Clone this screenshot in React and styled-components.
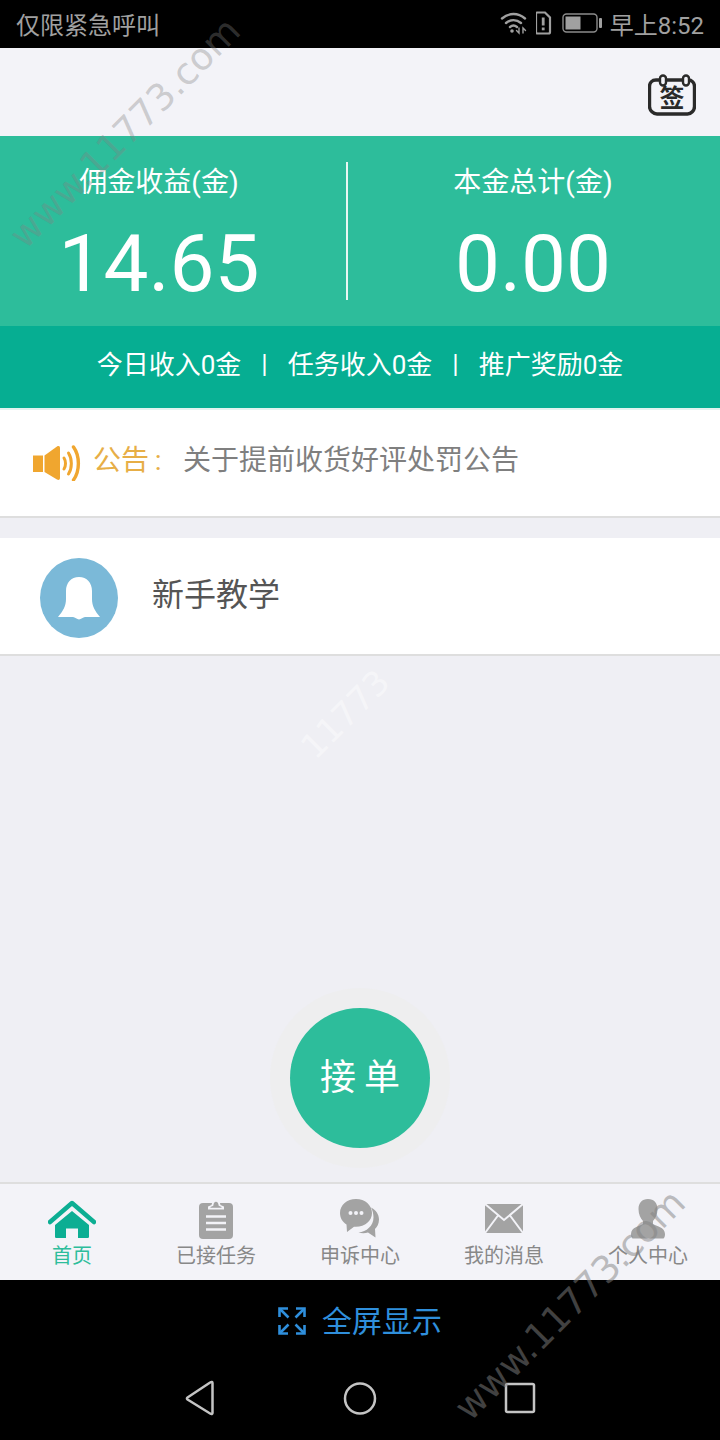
import React from 'react';
import styled, { createGlobalStyle } from 'styled-components';

const GlobalStyle = createGlobalStyle`
  html, body {
    margin: 0;
    padding: 0;
    background: #000;
  }
  body {
    font-family: Roboto, "Noto Sans CJK SC", sans-serif;
  }
`;

const Screen = styled.div`
  position: relative;
  width: 720px;
  height: 1440px;
  overflow: hidden;
  display: flex;
  flex-direction: column;
  background: #efeff4;
`;

const StatusBar = styled.div`
  height: 48px;
  flex: none;
  box-sizing: border-box;
  background: #000;
  color: #a0a0a0;
  display: flex;
  align-items: center;
  justify-content: space-between;
  padding: 0 16px 2px;
  font-size: 24px;
`;

const StatusRight = styled.div`
  display: flex;
  align-items: center;
  gap: 8px;
`;

const TopBar = styled.div`
  height: 88px;
  flex: none;
  box-sizing: border-box;
  background: #f3f3f8;
  display: flex;
  align-items: center;
  justify-content: flex-end;
  padding: 6px 24px 0 0;
`;

const SignIcon = styled.div`
  position: relative;
  width: 48px;
  height: 42px;
  display: flex;
  align-items: center;
  justify-content: center;
  color: #2a2a2a;
  font-size: 25px;
  font-weight: 700;
  line-height: 1;
`;

const SignFrame = styled.svg`
  position: absolute;
  inset: 0;
`;

const SignText = styled.span`
  position: relative;
  top: 3px;
`;

const Stats = styled.div`
  height: 190px;
  flex: none;
  background: #2dbd9b;
  display: grid;
  grid-template-columns: 348px 370px;
  align-items: center;
  color: #fff;
`;

const StatColumn = styled.div`
  height: 138px;
  display: flex;
  flex-direction: column;
  align-items: center;
  box-sizing: border-box;
  padding-top: 2px;
  padding-right: ${(p) => (p.$first ? '28px' : '0')};
  border-right: ${(p) => (p.$first ? '2px solid #e8f7f3' : 'none')};
`;

const StatLabel = styled.div`
  font-size: 28px;
  line-height: 38px;
`;

const StatValue = styled.div`
  font-size: 80px;
  line-height: 100px;
  margin-top: 12px;
`;

const Strip = styled.div`
  height: 84px;
  flex: none;
  box-sizing: border-box;
  background: #06ae92;
  color: #fff;
  font-size: 26px;
  display: flex;
  align-items: center;
  justify-content: center;
  gap: 20px;
  padding-bottom: 10px;
  border-bottom: 2px solid #e2f3ef;
`;

const StripDivider = styled.span`
  position: relative;
  top: 2px;
`;

const Notice = styled.div`
  height: 108px;
  flex: none;
  box-sizing: border-box;
  background: #fff;
  border-bottom: 2px solid #dedede;
  display: flex;
  align-items: center;
  padding: 0 0 0 32px;
  font-size: 28px;
`;

const NoticeLabel = styled.span`
  color: #e7ae46;
  margin-left: 11px;
  width: 90px;
  position: relative;
  top: -5px;
`;

const NoticeText = styled.span`
  color: #7f7f7f;
  position: relative;
  top: -5px;
`;

const GuideRow = styled.div`
  height: 118px;
  flex: none;
  box-sizing: border-box;
  margin-top: 20px;
  background: #fff;
  border-bottom: 2px solid #dedede;
  display: flex;
  align-items: center;
  padding: 4px 0 0 40px;
  gap: 34px;
  font-size: 32px;
  color: #555;
`;

const GuideLabel = styled.span`
  position: relative;
  top: -6px;
`;

const Main = styled.div`
  flex: 1;
  display: flex;
  flex-direction: column;
  align-items: center;
  justify-content: flex-end;
  padding-bottom: 14px;
`;

const OrderHalo = styled.div`
  width: 180px;
  height: 180px;
  border-radius: 50%;
  background: #eeeeef;
  display: flex;
  align-items: center;
  justify-content: center;
`;

const OrderButton = styled.div`
  width: 140px;
  height: 140px;
  border-radius: 50%;
  background: #2dbd9b;
  color: #fff;
  font-size: 36px;
  letter-spacing: 8px;
  padding-left: 8px;
  box-sizing: border-box;
  padding-bottom: 8px;
  display: flex;
  align-items: center;
  justify-content: center;
`;

const TabBar = styled.div`
  height: 98px;
  flex: none;
  box-sizing: border-box;
  background: #f3f3f8;
  border-top: 2px solid #dedede;
  display: grid;
  grid-template-columns: repeat(5, 144px);
`;

const Tab = styled.div`
  display: flex;
  flex-direction: column;
  align-items: center;
  padding-top: 15px;
  font-size: 20px;
  line-height: 28px;
  color: ${(p) => (p.$active ? '#2dbd9b' : '#888')};
`;

const TabIcon = styled.div`
  width: 50px;
  height: 40px;
  margin-bottom: 3px;
  display: flex;
  justify-content: center;
  align-items: center;
`;

const Bottom = styled.div`
  height: 160px;
  flex: none;
  background: #000;
  display: flex;
  flex-direction: column;
  align-items: center;
`;

const FullScreen = styled.div`
  height: 82px;
  display: flex;
  align-items: center;
  gap: 16px;
  color: #2f8fdc;
  font-size: 30px;
`;

const FullScreenLabel = styled.span`
  position: relative;
  top: -2px;
`;

const NavKeys = styled.div`
  width: 100%;
  height: 40px;
  margin-top: 17px;
  display: flex;
  justify-content: center;
  gap: 127px;
`;

const Watermark = styled.div`
  position: absolute;
  left: ${(p) => p.$x}px;
  top: ${(p) => p.$y}px;
  transform: translate(-50%, -50%) rotate(-45deg);
  white-space: nowrap;
  font-family: "DejaVu Sans", sans-serif;
  font-size: ${(p) => p.$size}px;
  color: ${(p) => p.$color};
  pointer-events: none;
`;

const Wifi = () => (
  <svg width="28" height="24" viewBox="0 0 28 24" fill="none" stroke="#a0a0a0" strokeWidth="2.400" strokeLinecap="round">
    <path d="M2 7.500c7-6 16-6 23 0" />
    <path d="M6 12c4.500-3.800 10.500-3.800 15 0" />
    <path d="M10 16c2-1.600 5-1.600 7 0" />
    <circle cx="12" cy="20" r="1.800" fill="#a0a0a0" stroke="none" />
    <path d="M19 17v5l-2.500-2.500M23 22v-5l2.500 2.500" strokeWidth="1.400" />
  </svg>
);

const Sim = () => (
  <svg width="18" height="24" viewBox="2 0 18 24">
    <path d="M3 1.500h8l5 5V21a1.500 1.500 0 0 1-1.500 1.500h-11A1.500 1.500 0 0 1 2 21V3A1.500 1.500 0 0 1 3 1.500z" fill="none" stroke="#a0a0a0" strokeWidth="2.200" />
    <rect x="7.800" y="6.500" width="2.800" height="8" fill="#a0a0a0" />
    <rect x="7.800" y="16.500" width="2.800" height="2.800" fill="#a0a0a0" />
  </svg>
);

const Battery = () => (
  <svg width="40" height="22" viewBox="0 0 40 22">
    <rect x="1" y="2" width="34" height="18" rx="3.500" fill="none" stroke="#8c8c8c" strokeWidth="1.400" />
    <rect x="3.500" y="4.500" width="15" height="13" fill="#a0a0a0" />
    <rect x="37" y="6" width="3" height="10" rx="1" fill="#a0a0a0" />
  </svg>
);

const Speaker = () => (
  <svg width="50" height="36" viewBox="0 0 50 36">
    <path d="M1 10.500h10V27H1z" fill="#f0a62f" />
    <path d="M12.500 10.500 25 1.500c2-1 3 0 3 1.500v30c0 1.500-1 2.500-3 1.500L12.500 27z" fill="#f0a62f" />
    <g fill="none" stroke="#f0a62f" strokeWidth="3" strokeLinecap="round">
      <path d="M32 13c2 3 2 8 0 11" />
      <path d="M36.500 8c3.800 6 3.800 15 0 21" />
      <path d="M41.500 2c6.500 9 6.500 24 0 33" strokeWidth="3.400" />
    </g>
  </svg>
);

const Bell = () => (
  <svg width="78" height="80" viewBox="0 0 78 80">
    <ellipse cx="39" cy="40" rx="39" ry="40" fill="#7bb9d8" />
    <path d="M39 19c-8 0-13 6-13 14v8c0 7-3 12-8 18h15c2 0 4 2.500 6 2.500s4-2.500 6-2.500h15c-5-6-8-11-8-18v-8c0-8-5-14-13-14z" fill="#fff" />
  </svg>
);

const HomeIcon = () => (
  <svg width="48" height="39" viewBox="0 0 48 39">
    <path d="M2 22 24 3l22 19" fill="none" stroke="#0cae93" strokeWidth="4.500" strokeLinecap="round" strokeLinejoin="round" />
    <path d="M24 11 7 25v11.500c0 1 .7 1.500 1.500 1.500H18v-9.500h12V38h9.500c.8 0 1.500-.5 1.500-1.500V25z" fill="#0cae93" />
  </svg>
);

const ClipboardIcon = () => (
  <svg width="36" height="40" viewBox="0 0 36 40">
    <rect x="1" y="4" width="34" height="36" rx="4" fill="#a3a3a3" />
    <path d="M10 10.500V7.500l3.500-1.500c.5-3 2-5 4.500-5s4 2 4.500 5L26 7.500v3z" fill="#f3f3f8" />
    <path d="M12.500 8.800V8l2.800-1.200c.3-2.500 1.200-4 2.700-4s2.400 1.500 2.700 4L23.500 8v.8z" fill="#a3a3a3" />
    <path d="M8 17.500h20M8 24h20M8 30.500h20" stroke="#f3f3f8" strokeWidth="2.600" />
  </svg>
);

const ChatIcon = () => (
  <svg width="40" height="40" viewBox="0 0 40 40">
    <path d="M31 8.500c5 2.500 8 7 8 12 0 4.500-2 7.500-4 9.500l.5 8.500-7.500-5c-3 1-6.500 1-9.500 0 8-.5 15-7 15-15 0-3.500-.8-7-2.500-10z" fill="#a3a3a3" />
    <path d="M16 0C7 0 0 6 0 14c0 5 2.500 9 6.500 11.500L7 33l7-5.300c.8.100 1.300.1 2 .1 9 0 16-6 16-13.800S25 0 16 0z" fill="#a3a3a3" />
    <circle cx="10.500" cy="14" r="2" fill="#f3f3f8" />
    <circle cx="16" cy="14" r="2" fill="#f3f3f8" />
    <circle cx="21.500" cy="14" r="2" fill="#f3f3f8" />
  </svg>
);

const MailIcon = () => (
  <svg width="40" height="32" viewBox="0 0 40 32">
    <rect x="1" y="1" width="38" height="29" fill="#a3a3a3" />
    <path d="M1 1 20 17 39 1M1 30 14 12.500M39 30 26 12.500" fill="none" stroke="#f3f3f8" strokeWidth="2" />
  </svg>
);

const PersonIcon = () => (
  <svg width="34" height="40" viewBox="0 0 34 40">
    <path d="M17 0c6 0 9.500 4 9.500 10 0 5-2 9.500-4.500 12v3c3 2 12 3 12 10 0 2-.5 3.500-1.500 4.500H1.500C.5 38.500 0 37 0 35c0-7 9-8 12-10v-3C9.500 19.500 7.500 15 7.500 10 7.500 4 11 0 17 0z" fill="#a3a3a3" />
  </svg>
);

const ExpandIcon = () => (
  <svg width="28" height="28" viewBox="0 0 28 28" fill="none" stroke="#2f8fdc" strokeWidth="2.600">
    <path d="M1.500 10V1.500H10M18 1.500h8.500V10M26.500 18v8.500H18M10 26.500H1.500V18" />
    <path d="M2 2l8.500 8.500M26 2l-8.500 8.500M26 26l-8.500-8.500M2 26l8.500-8.500" />
  </svg>
);

const BackKey = () => (
  <svg width="32" height="40" viewBox="0 0 32 40">
    <path d="M28.500 4v30c0 1-1 1.400-2 .8L3.500 20.500c-.8-.6-.8-1.400 0-2L26.500 3.300c1-.7 2-.3 2 .7z" fill="none" stroke="#c4c4c4" strokeWidth="2.500" strokeLinejoin="round" />
  </svg>
);

const HomeKey = () => (
  <svg width="34" height="40" viewBox="0 0 34 40">
    <circle cx="17" cy="19.500" r="15" fill="none" stroke="#c4c4c4" strokeWidth="2.500" />
  </svg>
);

const RecentKey = () => (
  <svg width="32" height="40" viewBox="0 0 32 40">
    <rect x="2" y="5" width="28" height="28" rx="1.500" fill="none" stroke="#c4c4c4" strokeWidth="2.500" />
  </svg>
);

const tabs = [
  { label: '首页', icon: <HomeIcon />, active: true },
  { label: '已接任务', icon: <ClipboardIcon /> },
  { label: '申诉中心', icon: <ChatIcon /> },
  { label: '我的消息', icon: <MailIcon /> },
  { label: '个人中心', icon: <PersonIcon /> },
];

const App = () => (
  <Screen>
    <GlobalStyle />
    <StatusBar>
      <span>仅限紧急呼叫</span>
      <StatusRight>
        <Wifi />
        <Sim />
        <Battery />
        <span>早上8:52</span>
      </StatusRight>
    </StatusBar>
    <TopBar>
      <SignIcon>
        <SignFrame width="48" height="42" viewBox="0 0 48 42">
          <path d="M8 6h32c4 0 6.500 3 6.500 6.500v20c0 4-3.500 7.500-7 7.500H9c-3.500 0-7.500-3.500-7.500-7.500v-20C1.500 9 4 6 8 6z" fill="none" stroke="#2a2a2a" strokeWidth="3.400" />
          <rect x="12" y="1.500" width="6" height="10" rx="3" fill="#f3f3f8" stroke="#2a2a2a" strokeWidth="2.400" />
          <rect x="35" y="1.500" width="6" height="10" rx="3" fill="#f3f3f8" stroke="#2a2a2a" strokeWidth="2.400" />
        </SignFrame>
        <SignText>签</SignText>
      </SignIcon>
    </TopBar>
    <Stats>
      <StatColumn $first>
        <StatLabel>佣金收益(金)</StatLabel>
        <StatValue>14.65</StatValue>
      </StatColumn>
      <StatColumn>
        <StatLabel>本金总计(金)</StatLabel>
        <StatValue>0.00</StatValue>
      </StatColumn>
    </Stats>
    <Strip>
      <span>今日收入0金</span>
      <StripDivider>|</StripDivider>
      <span>任务收入0金</span>
      <StripDivider>|</StripDivider>
      <span>推广奖励0金</span>
    </Strip>
    <Notice>
      <Speaker />
      <NoticeLabel>公告&#8202;&#8202;:</NoticeLabel>
      <NoticeText>关于提前收货好评处罚公告</NoticeText>
    </Notice>
    <GuideRow>
      <Bell />
      <GuideLabel>新手教学</GuideLabel>
    </GuideRow>
    <Main>
      <OrderHalo>
        <OrderButton>接单</OrderButton>
      </OrderHalo>
    </Main>
    <TabBar>
      {tabs.map((tab) => (
        <Tab key={tab.label} $active={tab.active}>
          <TabIcon>{tab.icon}</TabIcon>
          {tab.label}
        </Tab>
      ))}
    </TabBar>
    <Bottom>
      <FullScreen>
        <ExpandIcon />
        <FullScreenLabel>全屏显示</FullScreenLabel>
      </FullScreen>
      <NavKeys>
        <BackKey />
        <HomeKey />
        <RecentKey />
      </NavKeys>
    </Bottom>
    <Watermark $x={125} $y={133} $size={37} $color="rgba(130,130,130,0.36)">www.11773.com</Watermark>
    <Watermark $x={345} $y={714} $size={34} $color="rgba(255,255,255,0.42)">11773</Watermark>
    <Watermark $x={570} $y={1305} $size={37} $color="rgba(130,130,130,0.5)">www.11773.com</Watermark>
  </Screen>
);

export default App;
